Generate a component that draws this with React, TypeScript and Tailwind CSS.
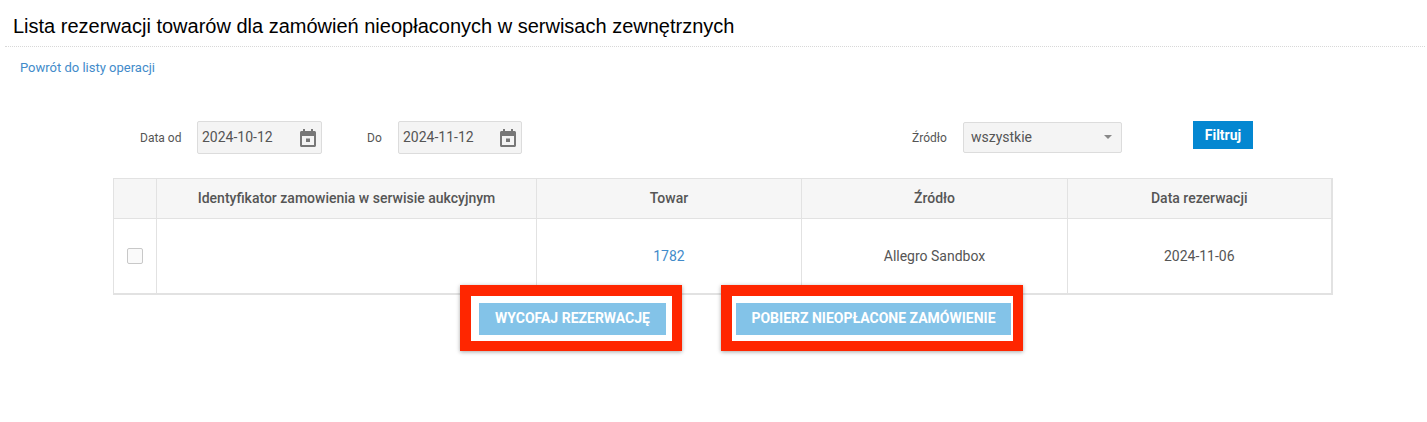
import React from "react";

const CalendarIcon = () => (
  <svg viewBox="0 0 16 18" className="w-[16px] h-[18px]" fill="#777">
    <path d="M3 0h2v2h6V0h2v2h1.500C15.300 2 16 2.700 16 3.500v13c0 .8-.7 1.500-1.500 1.500h-13C.7 18 0 17.300 0 16.500v-13C0 2.700.7 2 1.500 2H3V0zM2 7v9h12V7H2z" />
    <rect x="6" y="9.500" width="4" height="3.500" />
  </svg>
);

type DateFieldProps = {
  value: string;
  width: string;
};

const DateField: React.FC<DateFieldProps> = ({ value, width }) => (
  <div className={`${width} h-[33px] flex items-center justify-between pl-[4px] pr-[5px] bg-[#f4f4f4] border border-[#dcdcdc] rounded-[2px] text-[14px] text-[#555]`}>
    <span>{value}</span>
    <CalendarIcon />
  </div>
);

const headers = [
  "",
  "Identyfikator zamowienia w serwisie aukcyjnym",
  "Towar",
  "Źródło",
  "Data rezerwacji",
];

const FramedButton: React.FC<{ label: string; width: string; frame: string }> = ({ label, width, frame }) => (
  <div className="relative">
    <button className={`${width} h-[32px] bg-[#83c3e8] text-white text-[14px] font-bold uppercase`}>{label}</button>
    <div className={`absolute ${frame} border-[10px] border-t-[11px] border-l-[11px] border-[#ff2600] shadow-[0_1px_4px_rgba(0,0,0,0.35)] pointer-events-none`} />
  </div>
);

export default function App() {
  return (
    <div className="w-[1427px] h-[422px] bg-white overflow-hidden font-['Roboto',sans-serif] text-[#555]">
      <div className="ml-[5px] mr-[2px] h-[47px] pl-[8px] pt-[13px] border-b border-dotted border-[#d8d8d8]">
        <h1 className="font-['Liberation_Sans',sans-serif] text-[20px] leading-[26px] text-black">
          Lista rezerwacji towarów dla zamówień nieopłaconych w serwisach zewnętrznych
        </h1>
      </div>

      <a className="block ml-[20px] mt-[13px] text-[13px] leading-[16px] text-[#428bca]">Powrót do listy operacji</a>

      <div className="flex items-center mt-[45px] h-[33px] pl-[140px] text-[12px]">
        <span className="w-[57px]">Data od</span>
        <DateField value="2024-10-12" width="w-[125px]" />
        <span className="ml-[45px] w-[31px]">Do</span>
        <DateField value="2024-11-12" width="w-[124px]" />
        <span className="ml-[390px] w-[51px]">Źródło</span>
        <div className="w-[159px] h-[31px] -mt-[1px] flex items-center justify-between pl-[7px] pr-[9px] bg-[#f4f4f4] border border-[#dcdcdc] rounded-[2px] text-[14px]">
          <span>wszystkie</span>
          <span className="w-0 h-0 border-x-[4px] border-x-transparent border-t-[4px] border-t-[#888]" />
        </div>
        <button className="ml-[71px] -mt-[5px] w-[60px] h-[28px] bg-[#0487d1] text-white text-[14px] font-bold">Filtruj</button>
      </div>

      <table className="ml-[113px] mt-[24px] w-[1218px] table-fixed border-collapse text-[14px] border-b-2 border-r-2 border-[#e2e2e2]">
        <colgroup>
          <col className="w-[43px]" />
          <col className="w-[380px]" />
          <col className="w-[265px]" />
          <col className="w-[266px]" />
          <col className="w-[264px]" />
        </colgroup>
        <thead>
          <tr className="h-[40px] bg-[#f6f6f6]">
            {headers.map((h, i) => (
              <th key={i} className="border border-[#e2e2e2] font-medium text-center">{h}</th>
            ))}
          </tr>
        </thead>
        <tbody>
          <tr className="h-[75px]">
            <td className="border border-[#e2e2e2] text-center">
              <span className="inline-block align-middle -mt-[2px] w-[16px] h-[16px] bg-[#fafafa] border border-[#c8c8c8] rounded-[2px]" />
            </td>
            <td className="border border-[#e2e2e2]" />
            <td className="border border-[#e2e2e2] pt-[2px] text-center text-[#428bca]">1782</td>
            <td className="border border-[#e2e2e2] pt-[2px] text-center">Allegro Sandbox</td>
            <td className="border border-[#e2e2e2] pt-[2px] text-center">2024-11-06</td>
          </tr>
        </tbody>
      </table>

      <div className="flex gap-[70px] ml-[479px] mt-[8px]">
        <FramedButton label="Wycofaj rezerwację" width="w-[187px]" frame="-left-[19px] -right-[16px] -top-[18px] -bottom-[16px]" />
        <FramedButton label="Pobierz nieopłacone zamówienie" width="w-[275px]" frame="-left-[15px] -right-[12px] -top-[18px] -bottom-[16px]" />
      </div>
    </div>
  );
}
